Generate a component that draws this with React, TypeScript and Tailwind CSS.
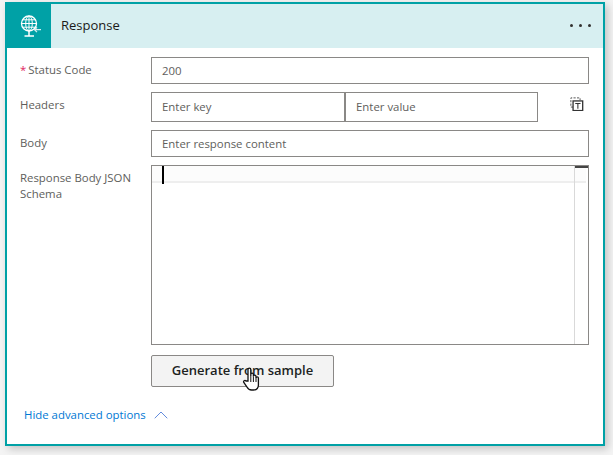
import React from 'react';
import { ChevronUp } from 'lucide-react';

const GlobeIcon = () => (
  <svg width="24" height="24" viewBox="0 0 24 24" fill="none" stroke="white" strokeWidth="1">
    <circle cx="12" cy="9.500" r="7.500" strokeWidth="1.300" />
    <ellipse cx="12" cy="9.500" rx="3.300" ry="7.500" />
    <path d="M4.500 9.500h15M5.500 5.800h13M5.500 13.200h13M12 2v15" />
    <path d="M12 17v4.500M7.500 22h9.500" strokeWidth="1.500" />
    <path d="M24.500 15.700h-7M20 13.300l-2.500 2.400 2.500 2.400" stroke="#d7eff1" strokeWidth="1.200" />
  </svg>
);

const FieldIcon = () => (
  <svg width="14" height="14" viewBox="0 0 16 16" fill="none">
    <path d="M3.500 11.500H1V1H11.500V3.500" stroke="#444" strokeWidth="1" strokeDasharray="2.500 1.500" />
    <rect x="3.500" y="4.500" width="11" height="11" fill="white" stroke="#333" strokeWidth="1.500" />
    <path d="M6 7.500h6M9 7.500v6" stroke="#333" strokeWidth="1.200" />
  </svg>
);

const labelClass = 'w-[131px] shrink-0 text-[11.4px] leading-[16px] text-[#605e5c]';
const inputClass = 'h-full flex items-center border border-[#8a8886] pl-[10px] text-[11.4px] text-[#605e5c] bg-white';

export default function App() {
  return (
    <div
      className="w-[613px] h-[455px] overflow-hidden bg-[#f4f4f4] pt-[2px] pl-[5px]"
      style={{ fontFamily: '"Open Sans", "Noto Sans", sans-serif' }}
    >
      <div className="w-[600px] h-[444px] bg-white border-2 border-[#00a1a6] shadow-[3px_3px_8px_rgba(0,0,0,0.2)] flex flex-col">
        <div className="h-[44px] shrink-0 flex items-center bg-[#d7eff1]">
          <div className="w-[44px] h-full bg-[#00a1a6] flex items-center justify-center">
            <GlobeIcon />
          </div>
          <span className="ml-[10px] text-[13px] text-[#1b1a19]">Response</span>
          <div className="ml-auto mr-[12px] flex gap-[6px] mb-[2px]">
            <span className="w-[3px] h-[3px] rounded-full bg-[#323130]" />
            <span className="w-[3px] h-[3px] rounded-full bg-[#323130]" />
            <span className="w-[3px] h-[3px] rounded-full bg-[#323130]" />
          </div>
        </div>

        <div className="flex-1 pl-[13px] pr-[14px] pt-[9px] flex flex-col">
          <div className="flex h-[27px] items-start">
            <div className={`${labelClass} pt-[5px]`}>
              <span className="text-[#e0245e] mr-[2px]">*</span>Status Code
            </div>
            <div className={`${inputClass} flex-1 text-[#201f1e]`}>200</div>
          </div>

          <div className="flex h-[30px] mt-[8px] items-start">
            <div className={`${labelClass} pt-[5px]`}>Headers</div>
            <div className={`${inputClass} w-[194px]`}>Enter key</div>
            <div className={`${inputClass} w-[193px]`}>Enter value</div>
            <div className="flex-1 flex justify-end pr-[5px] pt-[5px]">
              <FieldIcon />
            </div>
          </div>

          <div className="flex h-[27px] mt-[8px] items-start">
            <div className={`${labelClass} pt-[5px]`}>Body</div>
            <div className={`${inputClass} flex-1`}>Enter response content</div>
          </div>

          <div className="flex mt-[8px] h-[180px] items-start">
            <div className={`${labelClass} pt-[5px] pr-[10px]`}>Response Body JSON Schema</div>
            <div className="flex-1 h-full border border-[#8a8886] relative bg-white">
              <div className="h-[17px] mr-[2px] bg-[#fcfcfc] border-b-2 border-[#eeeeee]" />
              <div className="absolute left-[10px] top-0 w-[2px] h-[18px] bg-black" />
              <div className="absolute right-0 top-0 bottom-0 w-[14px] border-l border-[#d9d9d9]">
                <div className="h-[2px] bg-[#444444]" />
              </div>
            </div>
          </div>

          <div className="mt-[10px] pl-[131px]">
            <div className="relative w-[183px] h-[32px] flex items-center justify-center rounded-[2px] border border-[#8a8886] bg-[#f3f3f3] text-[13px] font-semibold text-[#201f1e]">
              Generate from sample
              <svg className="absolute left-[89px] top-[9px]" width="20" height="26" viewBox="0 0 18 26">
                <path
                  d="M6 16V4.500a1.400 1.400 0 0 1 2.800 0V11V9.500a1.300 1.300 0 0 1 2.600 0V11.500a1.300 1.300 0 0 1 2.600 0V13a1.200 1.200 0 0 1 2.400 0V20c0 3-2 5-5 5H9.500c-2 0-3.500-1-4.500-3L1.800 17.500c-.8-1.500 1-2.800 2.200-1.500z"
                  fill="white"
                  stroke="#111"
                  strokeWidth="1.300"
                />
                <path d="M8.800 11v6M11.400 11.500v5.500M14 13v4" stroke="#111" strokeWidth="1" />
              </svg>
            </div>
          </div>

          <div className="mt-[16px] flex items-center text-[11.4px] text-[#0078d4]">
            <span className="ml-[4px]">Hide advanced options</span>
            <ChevronUp size={24} strokeWidth={0.8} className="ml-[3px] text-[#3b6fd4]" />
          </div>
        </div>
      </div>
    </div>
  );
}
